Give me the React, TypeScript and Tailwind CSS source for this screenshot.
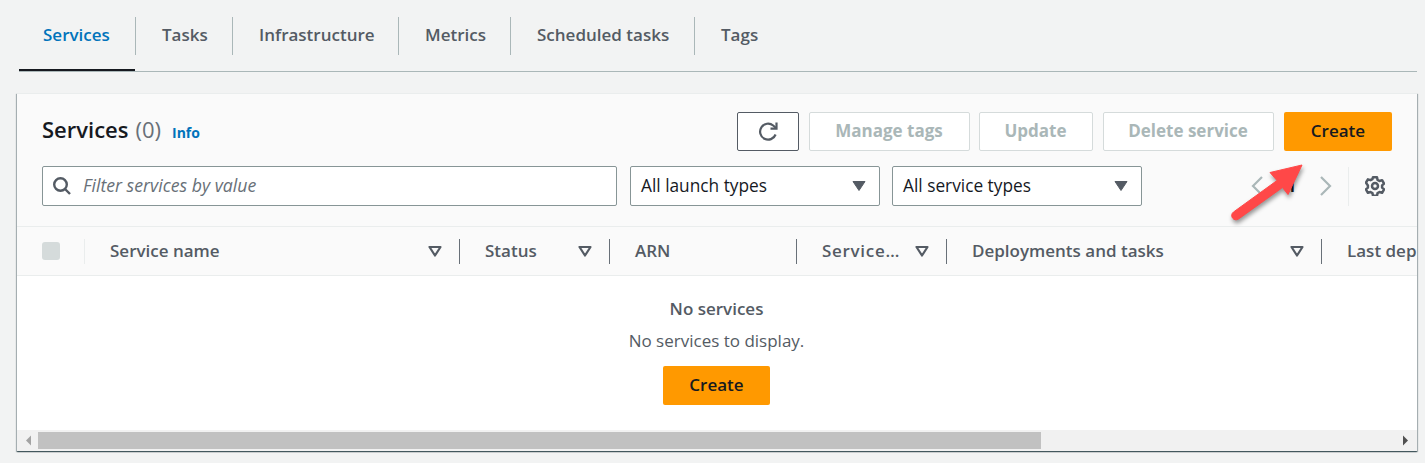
import React from "react";

const font = "[font-family:'Open_Sans','Noto_Sans',sans-serif]";

function Caret() {
  return (
    <svg width="14" height="12" viewBox="0 0 14 12" className="shrink-0">
      <path d="M1.500 2h11L7 10.500z" fill="none" stroke="#545b64" strokeWidth="2.200" strokeLinejoin="round" />
    </svg>
  );
}

function SolidCaret() {
  return (
    <svg width="14" height="12" viewBox="0 0 14 12" className="shrink-0">
      <path d="M1 1.500h12L7 10.500z" fill="#545b64" stroke="#545b64" strokeWidth="1" strokeLinejoin="round" />
    </svg>
  );
}

function Tab({ label, active, w, last }: { label: string; active?: boolean; w: string; last?: boolean }) {
  return (
    <div className={`${w} h-[71px] relative flex items-start pt-[22px] shrink-0 ${active ? "pl-[24px]" : "pl-[26px]"}`}>
      <span className={`text-[17px] leading-[26px] font-semibold ${active ? "text-[#0073bb]" : "text-[#545b64]"}`}>{label}</span>
      {!last && <span className="absolute right-0 top-[17px] h-[38px] w-px bg-[#aab7b8]" />}
      {active && <span className="absolute left-0 right-[1px] bottom-0 h-[2px] bg-[#16191f]" />}
    </div>
  );
}

function GhostButton({ label, w }: { label: string; w: string }) {
  return (
    <button className={`${w} h-[39px] pb-[2px] pr-[1px] rounded-[2px] border border-[#d5dbdb] bg-white text-[17px] font-bold text-[#aab7b8]`}>{label}</button>
  );
}

function Select({ label }: { label: string }) {
  return (
    <div className="w-[250px] h-[40px] rounded-[2px] border border-[#879596] bg-white flex items-center justify-between pl-[10px] pr-[13px] text-[17.300px] text-[#16191f]">
      <span className="-mt-[1px]">{label}</span>
      <SolidCaret />
    </div>
  );
}

function Col({ label, w, caret, sep = "dark", spaced }: { label: string; w: string; caret?: boolean; sep?: string; spaced?: boolean }) {
  return (
    <div className={`${w} shrink-0 relative h-full flex items-center pl-[25px] pr-[18px] justify-between`}>
      <span className={`text-[17px] font-semibold text-[#545b64] whitespace-nowrap ${spaced ? "tracking-[0.7px]" : ""}`}>{label}</span>
      {caret && <Caret />}
      {sep === "dark" && <span className="absolute right-0 top-[12px] h-[25px] w-px bg-[#687078]" />}
    </div>
  );
}

export default function App() {
  return (
    <div className={`${font} relative w-[1425px] h-[463px] overflow-hidden bg-[#f2f3f3]`}>
      <div className="ml-[19px] mr-[8px] h-[72px] border-b border-[#aab7b8] flex items-start">
        <Tab label="Services" active w="w-[117px]" />
        <Tab label="Tasks" w="w-[97px]" />
        <Tab label="Infrastructure" w="w-[166px]" />
        <Tab label="Metrics" w="w-[112px]" />
        <Tab label="Scheduled tasks" w="w-[184px]" />
        <Tab label="Tags" w="w-[100px]" last />
      </div>

      <div className="ml-[17px] mt-[21px] w-[1400px] h-[358px] flex flex-col bg-white shadow-[0_1px_1px_0_rgba(0,28,36,0.5),1px_1px_1px_0_rgba(0,28,36,0.25),-1px_1px_1px_0_rgba(0,28,36,0.25)] border-t border-[#eaeded]">
        <div className="bg-[#fafafa] h-[133px] border-b border-[#eaeded] shrink-0 pl-[25px] pr-[25px] pt-[18px]">
          <div className="flex items-center h-[39px]">
            <div className="flex items-baseline flex-1 -mt-[5px]">
              <span className="text-[22px] font-semibold text-[#16191f]">Services</span>
              <span className="text-[22px] text-[#687078] ml-[7px]">(0)</span>
              <span className="text-[14px] font-bold text-[#0073bb] ml-[11px]">Info</span>
            </div>
            <div className="flex">
              <button className="w-[62px] h-[39px] rounded-[2px] border border-[#545b64] bg-white flex items-center justify-center">
                <svg width="22" height="22" viewBox="0 0 22 22" fill="none" stroke="#545b64" strokeWidth="2.200">
                  <path d="M18.600 13.500A8 8 0 1 1 16.200 4.500L19 7" />
                  <path d="M19.500 1.500V7.600H13.500" />
                </svg>
              </button>
              <div className="ml-[10px]"><GhostButton label="Manage tags" w="w-[161px]" /></div>
              <div className="ml-[9px]"><GhostButton label="Update" w="w-[114px]" /></div>
              <div className="ml-[10px]"><GhostButton label="Delete service" w="w-[171px]" /></div>
              <button className="ml-[10px] w-[108px] h-[39px] pb-[2px] rounded-[2px] bg-[#ff9900] text-[17px] font-semibold text-[#16191f]">Create</button>
            </div>
          </div>
          <div className="flex items-center mt-[15px] h-[40px]">
            <div className="w-[575px] h-[40px] rounded-[2px] border border-[#879596] bg-white flex items-center pl-[9px] gap-[11px]">
              <svg width="20" height="20" viewBox="0 0 20 20" fill="none" stroke="#545b64" strokeWidth="2.400">
                <circle cx="8.500" cy="8.500" r="6.300" />
                <path d="M13 13l5 5" />
              </svg>
              <span className="text-[17.700px] italic text-[#687078] -mt-[1px]">Filter services by value</span>
            </div>
            <div className="ml-[13px]"><Select label="All launch types" /></div>
            <div className="ml-[12px]"><Select label="All service types" /></div>
            <div className="flex-1 flex items-center justify-end h-full">
              <svg width="14" height="22" viewBox="0 0 14 22" fill="none" stroke="#aab7b8" strokeWidth="2.200">
                <path d="M12 2L3 11l9 9" />
              </svg>
              <span className="text-[16px] text-[#16191f] font-bold w-[55px] text-center">1</span>
              <svg width="14" height="22" viewBox="0 0 14 22" fill="none" stroke="#aab7b8" strokeWidth="2.200">
                <path d="M2 2l9 9-9 9" />
              </svg>
              <span className="ml-[15px] h-[39px] w-px bg-[#eaeded]" />
              <svg className="ml-[16px] mr-[7px]" width="20" height="20" viewBox="0 0 24 24" fill="none" stroke="#545b64" strokeWidth="3" strokeLinejoin="round">
                <circle cx="12" cy="12" r="3.600" />
                <path d="M9.600 1.500h4.800l.7 3.200 2.300 1.300 3.100-1 2.400 4.100-2.400 2.200v2.600l2.400 2.200-2.400 4.100-3.100-1-2.300 1.300-.7 3.200H9.600l-.7-3.200-2.300-1.300-3.100 1-2.400-4.100 2.400-2.200v-2.600L1.100 8.100l2.400-4.100 3.100 1 2.300-1.300z" />
              </svg>
            </div>
          </div>
        </div>

        <div className="bg-[#fafafa] h-[49px] border-b border-[#eaeded] shrink-0 flex overflow-hidden">
          <div className="w-[68px] shrink-0 relative h-full flex items-center pl-[25px]">
            <span className="w-[18px] h-[18px] rounded-[3px] bg-[#d5dbdb]" />
            <span className="absolute right-0 top-[12px] h-[25px] w-px bg-[#eaeded]" />
          </div>
          <Col label="Service name" w="w-[375px]" caret />
          <Col label="Status" w="w-[150px]" caret />
          <Col label="ARN" w="w-[187px]" />
          <Col label="Service…" w="w-[150px]" caret spaced />
          <Col label="Deployments and tasks" w="w-[375px]" caret />
          <Col label="Last deployment" w="w-[200px]" sep="none" />
        </div>

        <div className="flex-1 flex flex-col items-center bg-white pt-[21px] pr-[1px]">
          <span className="text-[17px] font-semibold text-[#545b64] leading-[24px]">No services</span>
          <span className="text-[17px] text-[#545b64] leading-[24px] mt-[8px]">No services to display.</span>
          <button className="mt-[13px] w-[107px] h-[39px] pb-[2px] rounded-[2px] bg-[#ff9900] text-[17px] font-semibold text-[#16191f]">Create</button>
        </div>

        <div className="h-[21px] bg-[#f1f1f1] shrink-0 flex items-center">
          <svg width="21" height="21" viewBox="0 0 21 21" className="shrink-0"><path d="M9 10.500l5-5v10z" fill="#a3a3a3" /></svg>
          <div className="w-[1003px] h-[17px] bg-[#c1c1c1]" />
          <div className="flex-1" />
          <svg width="21" height="21" viewBox="0 0 21 21" className="shrink-0 mr-[1px]"><path d="M8 5.500l5 5-5 5z" fill="#505050" /></svg>
        </div>
      </div>

      <svg className="absolute left-[1225px] top-[160px] drop-shadow-[1px_3px_2px_rgba(0,0,0,0.4)]" width="85" height="70" viewBox="1225 160 85 70">
        <path d="M1302 165L1270 172.500L1277 180.500L1233.500 212a4.300 4.300 0 0 0 5 7L1282.500 187.500L1288 194.500z" fill="#ff4848" stroke="#ff4848" strokeWidth="1" strokeLinejoin="round" />
      </svg>
    </div>
  );
}
